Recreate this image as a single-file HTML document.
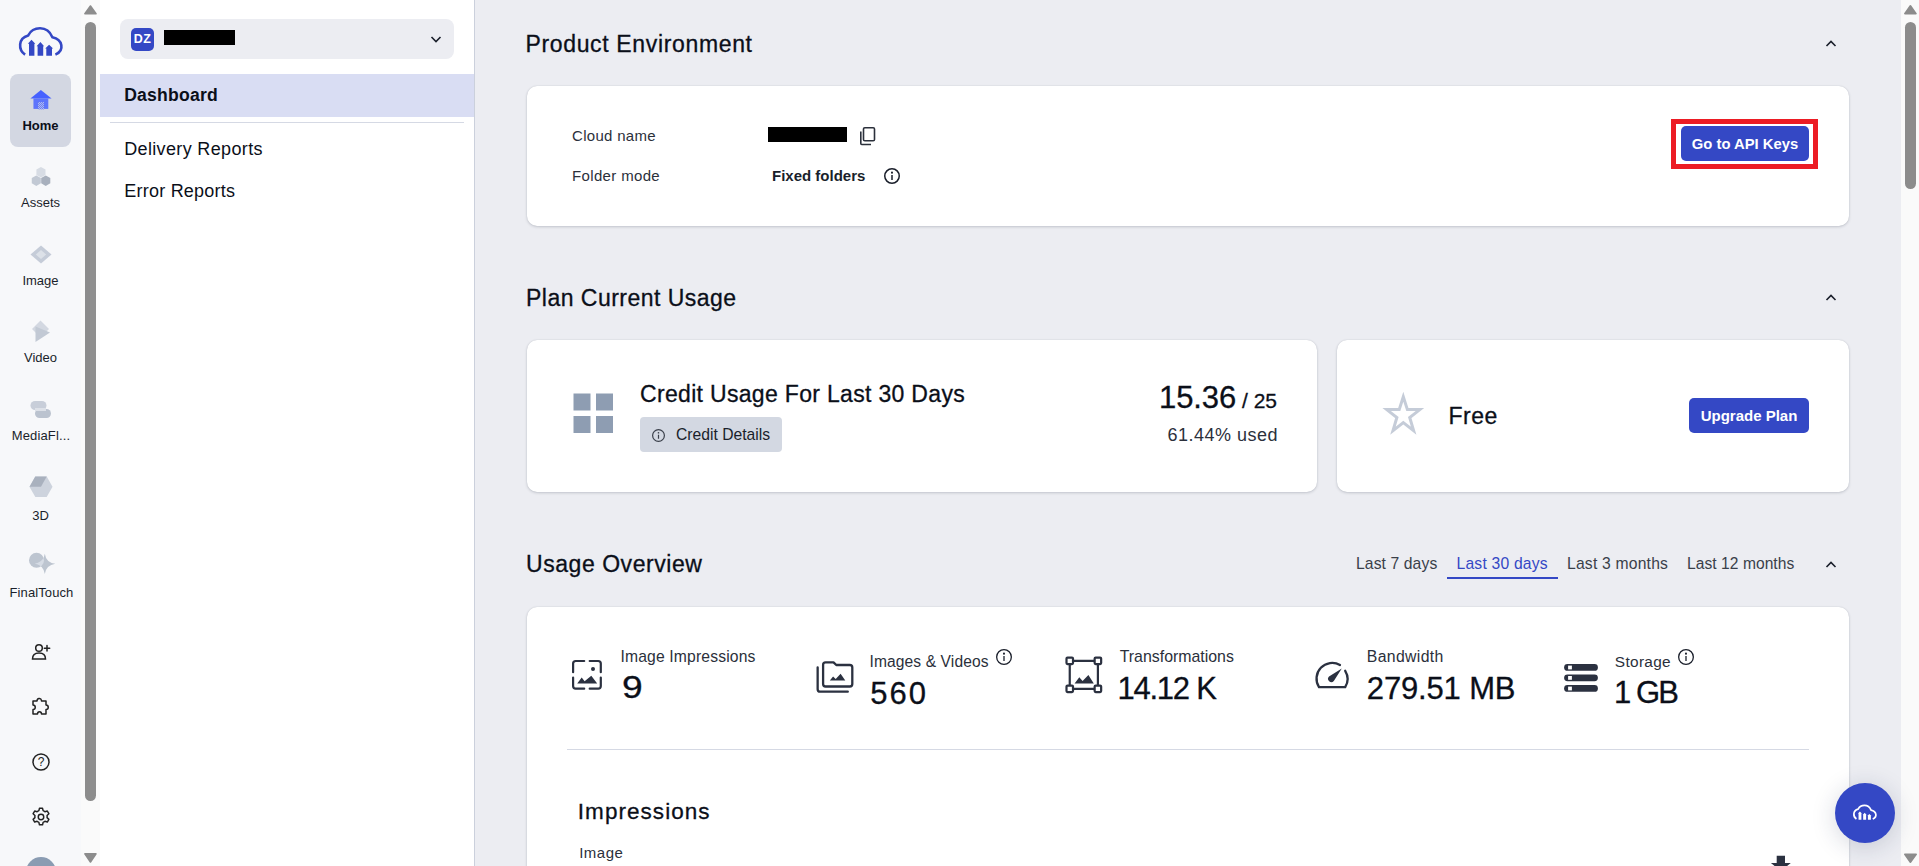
<!DOCTYPE html>
<html><head><meta charset="utf-8">
<style>
*{box-sizing:border-box;margin:0;padding:0}
html,body{width:1919px;height:866px;overflow:hidden;font-family:"Liberation Sans",sans-serif;color:#121722;background:#ECEDF2;position:relative}
.abs{position:absolute}
.t{white-space:nowrap}
.thumb{background:#8C8C8C;border-radius:6px}
.sitem{left:0;width:81px;text-align:center;font-size:13px;line-height:15px;color:#1a1f2b}
.card{position:absolute;background:#fff;border-radius:10px;box-shadow:0 1px 3px rgba(40,50,70,.2),0 0 1px rgba(40,50,70,.2)}
.btn{position:absolute;background:#3448C5;color:#fff;font-weight:bold;border-radius:6px;text-align:center;white-space:nowrap}
</style></head><body>
<div class="abs" style="left:0;top:0;width:81px;height:866px;background:#F7F8FA"></div>
<div class="abs" style="left:81px;top:0;width:19px;height:866px;background:#FAFAFA"></div>
<div class="abs" style="left:100px;top:0;width:375px;height:866px;background:#fff;border-right:1px solid #CBD0DC"></div>
<div class="abs" style="left:475px;top:0;width:1426px;height:866px;background:#ECEDF2"></div>
<div class="abs" style="left:1901px;top:0;width:18px;height:866px;background:#FAFAFA"></div>
<div class="abs" style="left:120px;top:19px;width:334px;height:40px;background:#ECEDF2;border-radius:8px"></div>
<div class="abs" style="left:131px;top:28px;width:23px;height:23px;background:#3448C5;border-radius:5px;color:#fff;font-weight:bold;font-size:12.5px;line-height:22px;letter-spacing:.3px;text-align:center">DZ</div>
<div class="abs" style="left:164px;top:30px;width:71px;height:15px;background:#000"></div>
<svg class="abs" style="left:429px;top:33px" width="14" height="12" viewBox="0 0 14 12"><path d="M2.5 4 L7 8.5 L11.5 4" fill="none" stroke="#1a1f2b" stroke-width="1.6"/></svg>
<div class="abs" style="left:100px;top:74px;width:374px;height:43px;background:#D9DDF3"></div>
<div class="abs t" style="left:124.2px;top:86.60px;font-size:17.6px;line-height:17.6px;letter-spacing:.2px;font-weight:bold;color:#0b0f19">Dashboard</div>
<div class="abs" style="left:110px;top:122px;width:354px;height:1px;background:#D5D9E4"></div>
<div class="abs t" style="left:124.2px;top:139.76px;font-size:18px;line-height:18px;color:#0b0f19;letter-spacing:.35px">Delivery Reports</div>
<div class="abs t" style="left:124.2px;top:181.76px;font-size:18px;line-height:18px;letter-spacing:.24px;color:#0b0f19">Error Reports</div>
<!-- sidebar -->
<svg class="abs" style="left:15px;top:22px" width="52" height="38" viewBox="0 0 52 38">
<path d="M10.1 32.6 C3.2 28 2.8 16.2 13.2 13.4 C18 4.3 32.2 3 37.4 15.2 C47.8 17.3 49.8 28.5 40.4 32.6" fill="none" stroke="#3448C5" stroke-width="2.6"/>
<path d="M16.5 17.8 L20.3 21.7 L19.4 21.7 L19.4 33.8 L14 33.8 L14 21.7 L12.8 21.7Z" fill="#3448C5"/>
<path d="M25.4 20.1 L29.1 24.3 L28.2 24.3 L28.2 33.8 L22.6 33.8 L22.6 24.3 L21.6 24.3Z" fill="#3448C5"/>
<path d="M34.1 22.7 L38.1 26.5 L37 26.5 L37 33.8 L31.3 33.8 L31.3 26.5 L30.2 26.5Z" fill="#3448C5"/>
</svg>
<div class="abs" style="left:10px;top:74px;width:61px;height:73px;background:#D3D7E2;border-radius:8px"></div>
<svg class="abs" style="left:29px;top:88px" width="24" height="23" viewBox="0 0 24 23">
<defs><pattern id="chk" width="2" height="2" patternUnits="userSpaceOnUse"><rect width="2" height="2" fill="#6A7EF6"/><rect width="1" height="1" fill="#AEB8EE"/><rect x="1" y="1" width="1" height="1" fill="#AEB8EE"/></pattern></defs>
<path d="M11.9 2.06 L22.6 10.5 L1.4 10.5Z" fill="#4661FF"/>
<rect x="4.45" y="10.4" width="14.85" height="10.5" fill="#5D74FB"/>
<rect x="9" y="14" width="6" height="7.4" fill="url(#chk)"/>
</svg>
<div class="abs sitem t" style="top:118px;font-weight:bold;font-size:13px;color:#0b0f19">Home</div>
<svg class="abs" style="left:30px;top:166px" width="22" height="22" viewBox="0 0 22 22">
<path d="M10.95 1.00 L15.50 3.62 L15.50 8.88 L10.95 11.50 L6.40 8.88 L6.40 3.62Z" fill="#D7DCE4"/>
<path d="M6.30 9.45 L10.85 12.07 L10.85 17.32 L6.30 19.95 L1.75 17.32 L1.75 12.07Z" fill="#C2C9D4"/>
<path d="M15.75 9.45 L20.30 12.07 L20.30 17.32 L15.75 19.95 L11.20 17.32 L11.20 12.07Z" fill="#A8B0BD"/>
</svg>
<div class="abs sitem t" style="top:195px">Assets</div>
<svg class="abs" style="left:29px;top:244px" width="24" height="22" viewBox="0 0 24 22">
<path d="M12 1.5 L22.5 10.5 L12 19.5 L1.5 10.5Z" fill="#C5CCD8"/>
<path d="M12 6 L17.2 10.5 L12 15 L6.8 10.5Z" fill="#DCE1E8"/>
</svg>
<div class="abs sitem t" style="top:273px">Image</div>
<svg class="abs" style="left:29px;top:319px" width="24" height="25" viewBox="0 0 24 25">
<path d="M11.5 1.5 L20 10 L11.5 18.5 L3 10Z" fill="#D3D8E1"/>
<path d="M6.5 7.5 L21 13.5 L6.5 23Z" fill="#C2C9D4"/>
</svg>
<div class="abs sitem t" style="top:350px">Video</div>
<svg class="abs" style="left:29px;top:399px" width="24" height="21" viewBox="0 0 24 21">
<rect x="1.5" y="2" width="16" height="9" rx="4.5" fill="#C8CED9"/>
<rect x="6" y="10" width="16" height="9" rx="4.5" fill="#BBC3CF"/>
<rect x="6" y="9" width="11" height="3" fill="#DDE1E8"/>
</svg>
<div class="abs sitem t" style="top:428px;letter-spacing:.15px;padding-left:1px">MediaFl...</div>
<svg class="abs" style="left:28px;top:475px" width="26" height="24" viewBox="0 0 26 24">
<path d="M7.3 1.5 L18.7 1.5 L24.5 11.8 L18.7 22 L7.3 22 L1.5 11.8Z" fill="#CDD3DD"/>
<path d="M7.3 1.5 L18.7 1.5 L13 11.8 L1.5 11.8Z" fill="#A9B1BE"/>
</svg>
<div class="abs sitem t" style="top:508px">3D</div>
<svg class="abs" style="left:28px;top:551px" width="30" height="26" viewBox="0 0 30 26">
<defs><clipPath id="ftc"><circle cx="8.5" cy="9.2" r="7.5"/></clipPath></defs>
<circle cx="8.5" cy="9.2" r="7.5" fill="#BDC5D0"/>
<path d="M16.8 2.7 Q18.1 11.5 27.3 12.8 Q18.1 14.1 16.8 23.1 Q15.5 14.1 6.7 12.8 Q15.5 11.5 16.8 2.7Z" fill="#BDC5D0"/>
<path d="M16.8 2.7 Q18.1 11.5 27.3 12.8 Q18.1 14.1 16.8 23.1 Q15.5 14.1 6.7 12.8 Q15.5 11.5 16.8 2.7Z" fill="#D6DCE5" clip-path="url(#ftc)"/>
</svg>
<div class="abs sitem t" style="top:585px;letter-spacing:.1px;padding-left:2px">FinalTouch</div>
<!-- bottom icons -->
<svg class="abs" style="left:30px;top:642px" width="22" height="20" viewBox="0 0 22 20" fill="none" stroke="#222" stroke-width="1.5" stroke-linecap="round">
<circle cx="9" cy="6" r="3.3"/>
<path d="M2.5 17 C2.5 12.5 5.5 11 9 11 C12.5 11 15.5 12.5 15.5 17 Z"/>
<path d="M17 3.5 L17 9 M14.3 6.2 L19.7 6.2"/>
</svg>
<svg class="abs" style="left:30px;top:696px" width="21" height="21" viewBox="0 0 21 21" fill="none" stroke="#222" stroke-width="1.5" stroke-linejoin="round">
<path d="M3 5 L7 5 C7 2 11 1.5 11.5 4.5 L11.5 5 L16 5 L16 9 C19 9 19 13.5 16 13.5 L16 18 L11.5 18 C11.5 15 7.5 15 7.5 18 L3 18 L3 13.5 C6 13.5 6 9 3 9Z"/>
</svg>
<svg class="abs" style="left:30px;top:751px" width="22" height="22" viewBox="0 0 22 22">
<circle cx="11" cy="11" r="8" fill="none" stroke="#222" stroke-width="1.5"/>
<text x="11" y="15.3" text-anchor="middle" font-family="Liberation Sans" font-size="12" fill="#222">?</text>
</svg>
<svg class="abs" style="left:30px;top:806px" width="22" height="22" viewBox="0 0 24 24" fill="none" stroke="#222" stroke-width="1.6" stroke-linejoin="round">
<path d="M10.3 2.5 h3.4 l.6 2.6 a7.5 7.5 0 0 1 2 1.2 l2.6 -.8 1.7 2.9 -2 1.9 a7.5 7.5 0 0 1 0 2.4 l2 1.9 -1.7 2.9 -2.6 -.8 a7.5 7.5 0 0 1 -2 1.2 l-.6 2.6 h-3.4 l-.6 -2.6 a7.5 7.5 0 0 1 -2 -1.2 l-2.6 .8 -1.7 -2.9 2 -1.9 a7.5 7.5 0 0 1 0 -2.4 l-2 -1.9 1.7 -2.9 2.6 .8 a7.5 7.5 0 0 1 2 -1.2Z"/>
<circle cx="12" cy="12" r="3"/>
</svg>
<div class="abs" style="left:26px;top:857px;width:30px;height:30px;border-radius:50%;background:#8A9CB2"></div>
<!-- left scrollbar -->
<svg class="abs" style="left:81px;top:0" width="19" height="866" viewBox="0 0 19 866">
<path d="M9.45 6 L15 13.8 L3.9 13.8Z" fill="#8C8C8C" stroke="#8C8C8C" stroke-width="1.6" stroke-linejoin="round"/>
<path d="M9.45 862 L15 853.9 L3.9 853.9Z" fill="#8C8C8C" stroke="#8C8C8C" stroke-width="1.6" stroke-linejoin="round"/>
</svg>
<div class="abs thumb" style="left:85px;top:22px;width:11px;height:779px"></div>

<div class="abs t" style="left:525.5px;top:32.53px;font-size:23px;line-height:23px;-webkit-text-stroke:.3px currentColor;letter-spacing:.65px;color:#0b0f19">Product Environment</div>
<svg class="abs" style="left:1823px;top:38px" width="16" height="12" viewBox="0 0 16 12"><path d="M3.5 8 L8 3.5 L12.5 8" fill="none" stroke="#1a1f2b" stroke-width="1.6"/></svg>
<div class="card" style="left:527px;top:86px;width:1322px;height:140px"></div>
<div class="abs t" style="left:572px;top:128.30px;font-size:15px;line-height:15px;letter-spacing:.3px;color:#2b303b">Cloud name</div>
<div class="abs t" style="left:572px;top:168.30px;font-size:15px;line-height:15px;letter-spacing:.35px;color:#2b303b">Folder mode</div>
<div class="abs" style="left:768px;top:127px;width:79px;height:15px;background:#000"></div>
<svg class="abs" style="left:858px;top:125px" width="20" height="22" viewBox="0 0 20 22" fill="none" stroke="#2b303b" stroke-width="1.6"><rect x="5.5" y="2.8" width="11" height="13" rx="1.3"/><path d="M2.8 6.5 L2.8 18.6 Q2.8 19.5 3.7 19.5 L13 19.5"/></svg>
<div class="abs t" style="left:772px;top:168.30px;font-size:15px;line-height:15px;font-weight:bold;color:#1a1f2b">Fixed folders</div>
<svg class="abs" style="left:882px;top:166px" width="20" height="20" viewBox="0 0 20 20"><circle cx="10" cy="10" r="7.25" fill="none" stroke="#1a1f2b" stroke-width="1.5"/><circle cx="10" cy="6.640000000000001" r="1.04" fill="#1a1f2b"/><path d="M10 9.04 L10 14.0" stroke="#1a1f2b" stroke-width="1.5"/></svg>
<div class="abs" style="left:1671px;top:119px;width:147px;height:50px;border:5px solid #EC1C24"></div>
<div class="btn" style="left:1681px;top:126px;width:128px;height:35px;font-size:14.8px;line-height:37px;border-radius:5px">Go to API Keys</div>
<div class="abs t" style="left:526px;top:286.53px;font-size:23px;line-height:23px;-webkit-text-stroke:.3px currentColor;letter-spacing:.48px;color:#0b0f19">Plan Current Usage</div>
<svg class="abs" style="left:1823px;top:292px" width="16" height="12" viewBox="0 0 16 12"><path d="M3.5 8 L8 3.5 L12.5 8" fill="none" stroke="#1a1f2b" stroke-width="1.6"/></svg>
<div class="card" style="left:527px;top:340px;width:790px;height:152px"></div>
<div class="card" style="left:1337px;top:340px;width:512px;height:152px"></div>
<svg class="abs" style="left:573px;top:393px" width="41" height="41" viewBox="0 0 41 41" fill="#8E9DB2"><rect x="0.5" y="0.5" width="17" height="17"/><rect x="23" y="0.5" width="17" height="17"/><rect x="0.5" y="23" width="17" height="17"/><rect x="23" y="23" width="17" height="17"/></svg>
<div class="abs t" style="left:640px;top:382.53px;font-size:23px;line-height:23px;-webkit-text-stroke:.3px currentColor;letter-spacing:.32px;color:#0b0f19">Credit Usage For Last 30 Days</div>
<div class="abs" style="left:640px;top:417px;width:142px;height:35px;background:#D3D8E2;border-radius:4px"></div>
<svg class="abs" style="left:649.5px;top:426.5px" width="17.0" height="17.0" viewBox="0 0 17.0 17.0"><circle cx="8.5" cy="8.5" r="5.9" fill="none" stroke="#3a3f4a" stroke-width="1.2"/><circle cx="8.5" cy="5.77" r="0.84" fill="#3a3f4a"/><path d="M8.5 7.72 L8.5 11.75" stroke="#3a3f4a" stroke-width="1.2"/></svg>
<div class="abs t" style="left:676px;top:427.21px;font-size:15.7px;line-height:15.7px;color:#1a1f2b">Credit Details</div>
<div class="abs t" style="right:642px;top:381.76px;font-size:31px;line-height:31px;-webkit-text-stroke:.3px currentColor;color:#0b0f19"><span style="letter-spacing:-.1px">15.36</span><span style="font-size:21px"> / 25</span></div>
<div class="abs t" style="right:641px;top:425.76px;font-size:18px;line-height:18px;letter-spacing:.5px;color:#2b303b">61.44% used</div>
<svg class="abs" style="left:1380px;top:390px" width="46" height="46" viewBox="0 0 46 46"><path d="M23.30 6.70 L27.39 19.59 L39.85 19.59 L29.71 27.52 L33.62 40.60 L23.30 32.58 L12.98 40.60 L16.89 27.52 L6.75 19.59 L19.21 19.59Z" fill="none" stroke="#C5CCD8" stroke-width="3" stroke-linejoin="miter"/></svg>
<div class="abs t" style="left:1448.5px;top:404.53px;font-size:23px;line-height:23px;-webkit-text-stroke:.3px currentColor;letter-spacing:.5px;color:#0b0f19">Free</div>
<div class="btn" style="left:1689px;top:398px;width:120px;height:35px;font-size:15px;line-height:35px;border-radius:5px">Upgrade Plan</div>
<div class="abs t" style="left:526px;top:552.83px;font-size:23px;line-height:23px;-webkit-text-stroke:.3px currentColor;letter-spacing:.55px;color:#0b0f19">Usage Overview</div>
<div class="abs t" style="left:1356px;top:556.21px;font-size:15.7px;line-height:15.7px;letter-spacing:.1px;color:#3a3f4a">Last 7 days</div>
<div class="abs t" style="left:1456.5px;top:556.21px;font-size:15.7px;line-height:15.7px;letter-spacing:.2px;color:#3448C5">Last 30 days</div>
<div class="abs" style="left:1447px;top:576.5px;width:111px;height:2px;background:#3448C5"></div>
<div class="abs t" style="left:1567px;top:556.21px;font-size:15.7px;line-height:15.7px;letter-spacing:.2px;color:#3a3f4a">Last 3 months</div>
<div class="abs t" style="left:1687px;top:556.29px;font-size:15.6px;line-height:15.6px;color:#3a3f4a;letter-spacing:.05px">Last 12 months</div>
<svg class="abs" style="left:1823px;top:559px" width="16" height="12" viewBox="0 0 16 12"><path d="M3.5 8 L8 3.5 L12.5 8" fill="none" stroke="#1a1f2b" stroke-width="1.6"/></svg>
<div class="card" style="left:527px;top:607px;width:1322px;height:300px"></div>
<svg class="abs" style="left:565px;top:650px" width="50" height="50" viewBox="0 0 50 50" fill="none" stroke="#2b3140" stroke-width="2.2" stroke-linecap="round">
<path d="M8.1 22.2 L8.1 13.6 Q8.1 11 10.7 11 L19.2 11"/>
<path d="M24.7 11 L33.2 11 Q35.8 11 35.8 13.6 L35.8 22.2"/>
<path d="M8.1 27.6 L8.1 36.1 Q8.1 38.7 10.7 38.7 L19.2 38.7"/>
<path d="M24.7 38.7 L33.2 38.7 Q35.8 38.7 35.8 36.1 L35.8 27.6"/>
<circle cx="28" cy="18.9" r="2" fill="#2b3140" stroke="none"/>
<path d="M12.2 33.6 L16.7 27.4 L19.6 31.3 L26.3 25.8 L32.2 33.6Z" fill="#2b3140" stroke="none"/>
</svg>
<svg class="abs" style="left:810px;top:650px" width="50" height="50" viewBox="0 0 50 50" fill="none" stroke="#2b3140" stroke-width="2.3" stroke-linecap="round" stroke-linejoin="round">
<path d="M13.1 14.8 Q13.1 12.3 15.6 12.3 L23.5 12.3 L26.3 15 L39.8 15 Q42.3 15 42.3 17.5 L42.3 34 Q42.3 36.5 39.8 36.5 L15.6 36.5 Q13.1 36.5 13.1 34Z"/>
<path d="M7.65 17.5 L7.65 39.2 Q7.65 41.7 10.1 41.7 L37.8 41.7"/>
<path d="M19.8 30.5 L23.1 26.5 L25.7 29 L30.6 23.8 L35.3 30.5Z" fill="#2b3140" stroke="none"/>
</svg>
<svg class="abs" style="left:1050px;top:630px" width="70" height="70" viewBox="0 0 70 70" fill="none" stroke="#2b3140" stroke-width="2.2">
<path d="M19.75 30.8 L47.9 30.8 M19.75 58.8 L47.9 58.8 M19.75 30.8 L19.75 58.8 M47.9 30.8 L47.9 58.8"/>
<rect x="16.5" y="27.55" width="6.5" height="6.5" rx="1" fill="#fff"/>
<rect x="44.65" y="27.55" width="6.5" height="6.5" rx="1" fill="#fff"/>
<rect x="16.5" y="55.55" width="6.5" height="6.5" rx="1" fill="#fff"/>
<rect x="44.65" y="55.55" width="6.5" height="6.5" rx="1" fill="#fff"/>
<path d="M24.6 53.4 L29.3 47.3 L32.6 51 L38.4 45.1 L43.8 53.4Z" fill="#2b3140" stroke="none"/>
</svg>
<svg class="abs" style="left:1308px;top:652px" width="50" height="50" viewBox="0 0 50 50" fill="none" stroke="#2b3140" stroke-width="2.3" stroke-linecap="round">
<path d="M32 13 A15.7 15.7 0 0 0 11 35.1 L37.2 35.1 A15.7 15.7 0 0 0 37.2 18.8"/>
<path d="M21 24.5 L33.8 16.5 L25.8 29 A3.2 3.2 0 0 1 21 24.5Z" fill="#2b3140" stroke="none"/>
</svg>
<svg class="abs" style="left:1556px;top:652px" width="50" height="50" viewBox="0 0 50 50">
<rect x="8.1" y="12.1" width="33.8" height="6.7" rx="3.35" fill="#2b3140"/>
<rect x="8.1" y="22.5" width="33.8" height="6.7" rx="3.35" fill="#2b3140"/>
<rect x="8.1" y="33.1" width="33.8" height="6.7" rx="3.35" fill="#2b3140"/>
<rect x="12.1" y="13.6" width="3.8" height="3.8" fill="#fff"/>
<rect x="12.1" y="24" width="3.8" height="3.8" fill="#fff"/>
<rect x="12.1" y="34.6" width="3.8" height="3.8" fill="#fff"/>
</svg>
<div class="abs t" style="left:620.5px;top:648.71px;font-size:15.7px;line-height:15.7px;letter-spacing:.15px;color:#2b303b">Image Impressions</div>
<div class="abs t" style="left:621.5px;top:671.76px;font-size:31px;line-height:31px;-webkit-text-stroke:.3px currentColor;color:#0b0f19;display:inline-block;transform:scaleX(1.2);transform-origin:left">9</div>
<div class="abs t" style="left:869.5px;top:653.79px;font-size:15.6px;line-height:15.6px;letter-spacing:.1px;color:#2b303b">Images &amp; Videos</div>
<svg class="abs" style="left:994px;top:647px" width="20" height="20" viewBox="0 0 20 20"><circle cx="10" cy="10" r="7.35" fill="none" stroke="#1a1f2b" stroke-width="1.3"/><circle cx="10" cy="6.640000000000001" r="1.04" fill="#1a1f2b"/><path d="M10 9.04 L10 14.0" stroke="#1a1f2b" stroke-width="1.3"/></svg>
<div class="abs t" style="left:870.2px;top:677.56px;font-size:31px;line-height:31px;-webkit-text-stroke:.3px currentColor;color:#0b0f19;letter-spacing:2px">560</div>
<div class="abs t" style="left:1119.7px;top:649.04px;font-size:15.9px;line-height:15.9px;color:#2b303b">Transformations</div>
<div class="abs t" style="left:1117.5px;top:672.76px;font-size:31px;line-height:31px;-webkit-text-stroke:.3px currentColor;color:#0b0f19;letter-spacing:-1.25px">14.12 K</div>
<div class="abs t" style="left:1366.8px;top:649.43px;font-size:15.8px;line-height:15.8px;letter-spacing:.35px;color:#2b303b">Bandwidth</div>
<div class="abs t" style="left:1366.8px;top:672.76px;font-size:31px;line-height:31px;-webkit-text-stroke:.3px currentColor;color:#0b0f19;letter-spacing:-.15px">279.51 MB</div>
<div class="abs t" style="left:1614.8px;top:654.16px;font-size:15.4px;line-height:15.4px;letter-spacing:.33px;color:#2b303b">Storage</div>
<svg class="abs" style="left:1676px;top:647px" width="20" height="20" viewBox="0 0 20 20"><circle cx="10" cy="10" r="7.35" fill="none" stroke="#1a1f2b" stroke-width="1.3"/><circle cx="10" cy="6.640000000000001" r="1.04" fill="#1a1f2b"/><path d="M10 9.04 L10 14.0" stroke="#1a1f2b" stroke-width="1.3"/></svg>
<div class="abs t" style="left:1614px;top:677.26px;font-size:31px;line-height:31px;-webkit-text-stroke:.3px currentColor;color:#0b0f19;letter-spacing:-1.9px">1 GB</div>
<div class="abs" style="left:567px;top:748.5px;width:1242px;height:1px;background:#D5D9E4"></div>
<div class="abs t" style="left:577.8px;top:801.45px;font-size:22.5px;line-height:22.5px;-webkit-text-stroke:.3px currentColor;letter-spacing:1.05px;color:#0b0f19">Impressions</div>
<div class="abs t" style="left:579.2px;top:845.30px;font-size:15px;line-height:15px;letter-spacing:.5px;color:#2b303b">Image</div>
<svg class="abs" style="left:1770px;top:855px" width="22" height="14" viewBox="0 0 22 14"><path d="M6.7 0.7 L15 0.7 L15 8 L20.8 8 L10.85 16 L0.9 8 L6.7 8Z" fill="#2b3140"/></svg>
<div class="abs" style="left:1835px;top:783px;width:60px;height:60px;border-radius:50%;background:#3448C5;box-shadow:0 4px 24px rgba(30,40,80,.18)"></div>
<svg class="abs" style="left:1851px;top:801px" width="28" height="22" viewBox="0 0 52 38"><path d="M10.1 32 C3.5 27.5 3 16.5 13.2 13.6 C18 5 32 3.5 37.3 15.4 C47.5 17.5 49.5 28 40.4 32" fill="none" stroke="#fff" stroke-width="3.2"/><path d="M16.5 18 L20.2 21.7 L19.3 21.7 L19.3 33.3 L14 33.3 L14 21.7 L12.9 21.7Z" fill="#fff"/><path d="M25.4 20.2 L29 24.4 L28.1 24.4 L28.1 33.3 L22.6 33.3 L22.6 24.4 L21.7 24.4Z" fill="#fff"/><path d="M34.1 22.8 L38 26.5 L36.9 26.5 L36.9 33.3 L31.4 33.3 L31.4 26.5 L30.3 26.5Z" fill="#fff"/></svg>
<svg class="abs" style="left:1901px;top:0" width="18" height="866" viewBox="0 0 18 866"><path d="M9.4 5.8 L15 13.6 L3.8 13.6Z" fill="#8C8C8C" stroke="#8C8C8C" stroke-width="1.6" stroke-linejoin="round"/><path d="M9.4 862.2 L15.2 854.3 L3.8 854.3Z" fill="#8C8C8C" stroke="#8C8C8C" stroke-width="1.6" stroke-linejoin="round"/></svg>
<div class="abs thumb" style="left:1905px;top:22px;width:11px;height:167px"></div>
</body></html>
